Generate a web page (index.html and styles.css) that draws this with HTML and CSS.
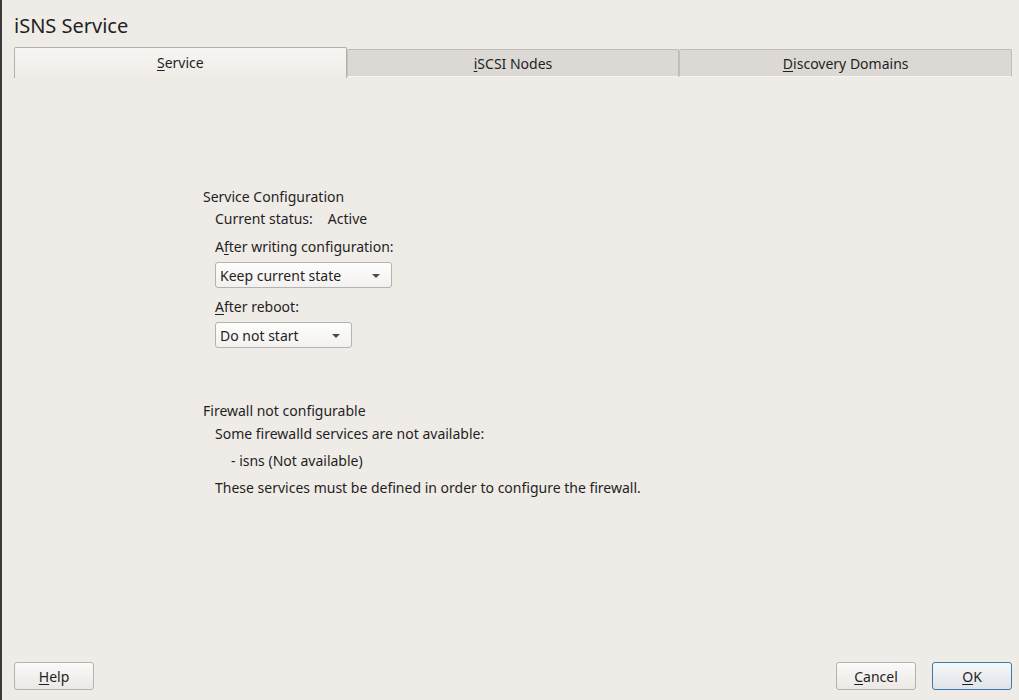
FILE: index.html
```html
<!DOCTYPE html>
<html>
<head>
<meta charset="utf-8">
<link rel="stylesheet" href="styles.css">
</head>
<body>
<div class="window">
  <h1 class="title">iSNS Service</h1>
  <div class="tabs">
    <div class="tab active"><u>S</u>ervice</div>
    <div class="tab"><u>i</u>SCSI Nodes</div>
    <div class="tab"><u>D</u>iscovery Domains</div>
  </div>
  <div class="content">
    <div class="form">
      <div class="group-title">Service Configuration</div>
      <div class="indent">
        <div class="status"><span>Current status:</span><span class="status-val">Active</span></div>
        <div class="label">A<u>f</u>ter writing configuration:</div>
        <div class="combo combo-wide"><span>Keep current state</span><span class="arrow"></span></div>
        <div class="label"><u>A</u>fter reboot:</div>
        <div class="combo combo-narrow"><span>Do not start</span><span class="arrow"></span></div>
      </div>
      <div class="group-title fw-title">Firewall not configurable</div>
      <div class="indent">
        <div class="line">Some firewalld services are not available:</div>
        <div class="line sub">- isns (Not available)</div>
        <div class="line">These services must be defined in order to configure the firewall.</div>
      </div>
    </div>
  </div>
  <div class="footer">
    <button class="btn"><u>H</u>elp</button>
    <div class="spacer"></div>
    <button class="btn"><u>C</u>ancel</button>
    <button class="btn btn-default"><u>O</u>K</button>
  </div>
</div>
</body>
</html>
```

FILE: styles.css
```css
html, body {
  margin: 0;
  padding: 0;
  height: 100%;
}
body {
  background: #efebe7;
  font-family: "Noto Sans", "DejaVu Sans", sans-serif;
  font-size: 14px;
  color: #1f1f1f;
}
u {
  text-decoration-thickness: 1px;
  text-underline-offset: 2px;
}
.window {
  height: 700px;
  box-sizing: border-box;
  border-left: 2px solid #3a3a3a;
  display: flex;
  flex-direction: column;
  padding: 0 7px 10px 12px;
}
.title {
  margin: 0;
  font-weight: normal;
  font-size: 20px;
  line-height: 28px;
  padding-top: 12px;
  height: 35px;
  box-sizing: border-box;
}
.tabs {
  display: flex;
  align-items: flex-start;
  margin-top: 12px;
  height: 31px;
}
.tab {
  flex: 1;
  height: 28px;
  margin-top: 2px;
  box-sizing: border-box;
  background: #dcd9d5;
  border: 1px solid #bfbbb7;
  border-bottom-color: #f7f5f3;
  text-align: center;
  line-height: 27px;
  border-radius: 2px 2px 0 0;
}
.tab + .tab {
  border-left-color: #c4c0bc;
}
.tab.active {
  height: 31px;
  margin-top: 0;
  background: linear-gradient(#f7f5f3, #efebe7);
  border-color: #b3afab;
  border-bottom: none;
  line-height: 30px;
}
.content {
  flex: 1;
  padding-top: 109px;
  padding-left: 189px;
}
.form {
  display: flex;
  flex-direction: column;
}
.group-title {
  line-height: 20px;
}
.indent {
  padding-left: 12px;
  display: flex;
  flex-direction: column;
}
.status {
  line-height: 20px;
  margin-top: 2px;
  display: flex;
}
.status-val {
  margin-left: 15px;
}
.label {
  line-height: 20px;
  margin-top: 8px;
}
.combo + .label {
  margin-top: 9px;
}
.combo {
  margin-top: 5px;
  height: 26px;
  box-sizing: border-box;
  border: 1px solid #b6b2ae;
  border-radius: 3px;
  background: linear-gradient(#fdfdfc, #f3f1ef);
  display: flex;
  align-items: center;
  justify-content: space-between;
  padding: 0 11px 0 4px;
}
.combo-wide { width: 177px; }
.combo-narrow { width: 137px; }
.arrow {
  width: 0;
  height: 0;
  border-left: 4px solid transparent;
  border-right: 4px solid transparent;
  border-top: 4px solid #4a4a4a;
  margin-top: 1px;
}
.fw-title {
  margin-top: 53px;
}
.line {
  line-height: 20px;
  margin-top: 3px;
}
.line + .line {
  margin-top: 7px;
}
.sub {
  padding-left: 16px;
}
.footer {
  display: flex;
  align-items: center;
  gap: 16px;
}
.spacer { flex: 1; }
.btn {
  width: 80px;
  height: 28px;
  box-sizing: border-box;
  font-family: inherit;
  font-size: 14px;
  color: #1f1f1f;
  border: 1px solid #b6b2ae;
  border-radius: 3px;
  background: linear-gradient(#fbfaf9, #ebe8e5);
  padding: 0;
}
.btn-default {
  border-color: #3b7bab;
  background: linear-gradient(#f6f7f8, #e0e4e8);
}
```
